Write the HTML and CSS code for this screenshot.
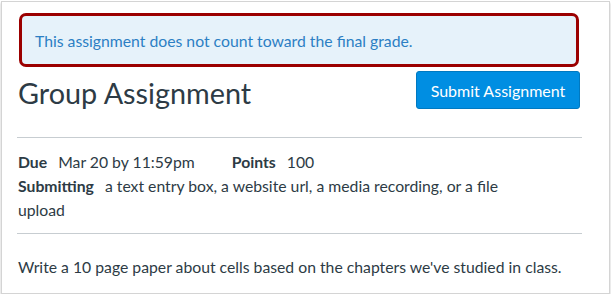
FILE: index.html
```html
<!DOCTYPE html>
<html>
<head>
<meta charset="utf-8">
<link rel="stylesheet" href="styles.css">
</head>
<body>
<div class="frame">
  <div class="alert">This assignment does not count toward the final grade.</div>
  <div class="header">
    <h1 class="title">Group Assignment</h1>
    <button class="submit">Submit Assignment</button>
  </div>
  <div class="details">
    <div class="row"><span class="label">Due</span><span class="value">Mar 20 by 11:59pm</span><span class="label points">Points</span><span class="value">100</span></div>
    <div class="row"><span class="label">Submitting</span>a text entry box, a website url, a media recording, or a file upload</div>
  </div>
  <p class="desc">Write a 10 page paper about cells based on the chapters we've studied in class.</p>
</div>
</body>
</html>
```
FILE: styles.css
```css
html, body {
  margin: 0;
  padding: 0;
  background: #ffffff;
}
body {
  font-family: Lato, "Open Sans", sans-serif;
  color: #2d3b45;
}
.frame {
  margin: 1px 1px 0 1px;
  height: 293px;
  box-sizing: border-box;
  border: 1px solid #d4d4d4;
  box-shadow: 0 2px 2px rgba(0,0,0,0.25);
  padding: 11px 27px 0 15px;
}
.alert {
  margin: 0 3px 0 2px;
  border: 3px solid #9b0000;
  border-radius: 7px;
  background: #e6f2fa;
  color: #2c7fc4;
  font-size: 15.75px;
  height: 54px;
  box-sizing: border-box;
  padding: 0 13px;
  display: flex;
  align-items: center;
}
.header {
  display: flex;
  justify-content: space-between;
  align-items: flex-start;
  margin-top: 5px;
  padding-bottom: 26px;
  border-bottom: 1px solid #c7cdd1;
}
.title {
  margin: 3px 0 0 1px;
  font-size: 28.8px;
  font-weight: 400;
  line-height: 36px;
}
.submit {
  font-family: Lato, sans-serif;
  font-size: 16px;
  color: #ffffff;
  background: #008ee2;
  border: 1px solid #0079c1;
  border-radius: 3px;
  height: 38px;
  width: 164px;
  padding: 0;
  margin-top: -1px;
  margin-right: 2px;
}
.details {
  padding: 12px 70px 11px 1px;
  border-bottom: 1px solid #c7cdd1;
  font-size: 15.75px;
  line-height: 24px;
}
.label {
  font-weight: 700;
  margin-right: 11px;
}
.points {
  margin-left: 37px;
}
.desc {
  margin: 21px 0 0 1px;
  font-size: 15.75px;
  line-height: 24px;
}
```
